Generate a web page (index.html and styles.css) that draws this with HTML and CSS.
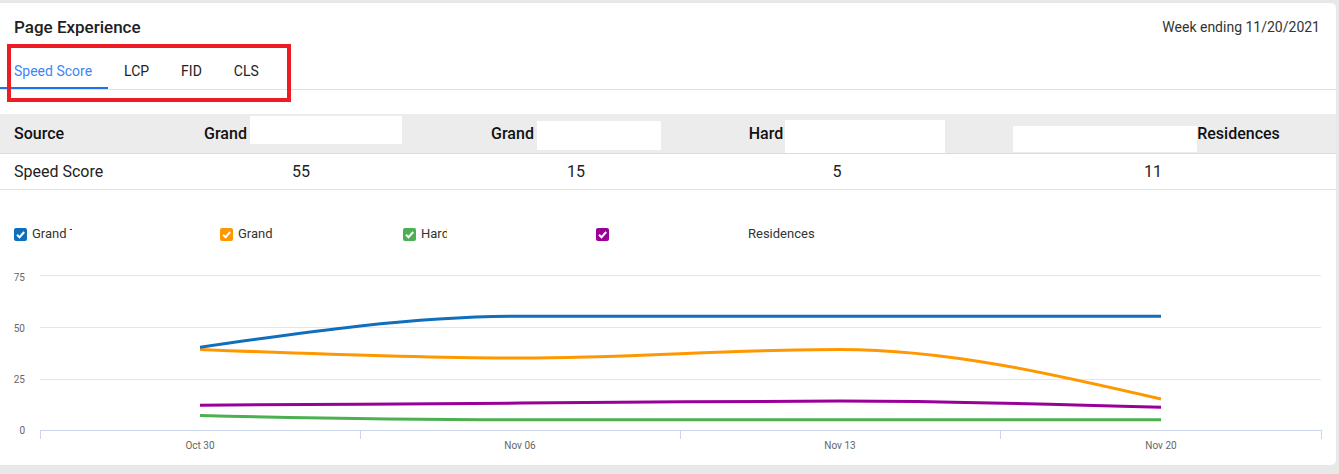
FILE: index.html
```html
<!DOCTYPE html>
<html>
<head>
<meta charset="utf-8">
<link rel="stylesheet" href="styles.css">
</head>
<body>
<div class="card">
  <div class="head">
    <div class="title">Page Experience</div>
    <div class="week">Week ending 11/20/2021</div>
  </div>
  <div class="tabs">
    <div class="tab active">Speed Score</div>
    <div class="tab">LCP</div>
    <div class="tab">FID</div>
    <div class="tab">CLS</div>
  </div>
  <div class="annot"></div>

  <div class="table">
    <div class="thead">
      <div class="th first">Source</div>
      <div class="th c2"><span class="htxt">Grand</span><span class="redact r1"></span></div>
      <div class="th c3"><span class="htxt">Grand</span><span class="redact r2"></span></div>
      <div class="th c4"><span class="htxt">Hard</span><span class="redact r3"></span></div>
      <div class="th c5"><span class="redact r4"></span><span class="htxt">Residences</span></div>
    </div>
    <div class="trow">
      <div class="td first">Speed Score</div>
      <div class="td">55</div>
      <div class="td">15</div>
      <div class="td d4">5</div>
      <div class="td d5">11</div>
    </div>
  </div>

  <div class="legend">
    <div class="li li1">
      <svg class="cb" viewBox="0 0 13 13"><rect width="13" height="13" rx="2" fill="#0f6fbd"/><path d="M3 6.8 L5.5 9.2 L10.2 4" stroke="#fff" stroke-width="2" fill="none"/></svg>
      <span class="lab w1">Grand T</span>
    </div>
    <div class="li li2">
      <svg class="cb" viewBox="0 0 13 13"><rect width="13" height="13" rx="2" fill="#ff9800"/><path d="M3 6.8 L5.5 9.2 L10.2 4" stroke="#fff" stroke-width="2" fill="none"/></svg>
      <span class="lab w2">Grand H</span>
    </div>
    <div class="li li3">
      <svg class="cb" viewBox="0 0 13 13"><rect width="13" height="13" rx="2" fill="#4caf50"/><path d="M3 6.8 L5.5 9.2 L10.2 4" stroke="#fff" stroke-width="2" fill="none"/></svg>
      <span class="lab w3">Hard Rock</span>
    </div>
    <div class="li li4">
      <svg class="cb" viewBox="0 0 13 13"><rect width="13" height="13" rx="2" fill="#990099"/><path d="M3 6.8 L5.5 9.2 L10.2 4" stroke="#fff" stroke-width="2" fill="none"/></svg>
      <span class="lab blank"></span><span class="lab">Residences</span>
    </div>
  </div>

  <svg class="chart" width="1336" height="197" viewBox="0 258 1336 197">
    <g stroke="#e6e6e6" stroke-width="1">
      <line x1="40" y1="274.5" x2="1321" y2="274.5"/>
      <line x1="40" y1="326.5" x2="1321" y2="326.5"/>
      <line x1="40" y1="378.5" x2="1321" y2="378.5"/>
    </g>
    <g stroke="#ccd6eb" stroke-width="1">
      <line x1="40" y1="429.5" x2="1321" y2="429.5"/>
      <line x1="40.5" y1="429" x2="40.5" y2="438"/>
      <line x1="360.5" y1="429" x2="360.5" y2="438"/>
      <line x1="680.5" y1="429" x2="680.5" y2="438"/>
      <line x1="1000.5" y1="429" x2="1000.5" y2="438"/>
      <line x1="1321.5" y1="429" x2="1321.5" y2="438"/>
    </g>
    <g class="ylab" text-anchor="end">
      <text x="25" y="280">75</text>
      <text x="25" y="331">50</text>
      <text x="25" y="382">25</text>
      <text x="25" y="433">0</text>
    </g>
    <g class="xlab" text-anchor="middle">
      <text x="200" y="448">Oct 30</text>
      <text x="520" y="448">Nov 06</text>
      <text x="840" y="448">Nov 13</text>
      <text x="1161" y="448">Nov 20</text>
    </g>
    <g fill="none" stroke-width="3" stroke-linecap="butt">
      <path stroke="#4caf50" d="M200 414.5 C306.7 417 413.3 418.7 520 418.7 L1161 418.7"/>
      <path stroke="#990099" d="M200 404.2 C306.7 403.5 413.3 402.8 520 402.1 C626.7 401.4 733.3 400.1 840 400.1 C947 400.1 1054 403.2 1161 406.3"/>
      <path stroke="#ff9800" d="M200 348.4 C306.7 352.8 413.3 357.1 520 357.1 C626.7 357.1 733.3 348.4 840 348.4 C947 348.4 1054 373.2 1161 398"/>
      <path stroke="#0f6fbd" d="M200 346.3 C306.7 330.8 413.3 315.3 520 315.3 L1161 315.3"/>
    </g>
  </svg>
</div>
</body>
</html>
```

FILE: styles.css
```css
* { box-sizing: border-box; }
body {
  margin: 0;
  background: #e8e8e8;
  font-family: Roboto, "Liberation Sans", Arial, sans-serif;
  color: #222;
}
.card {
  position: relative;
  margin-top: 3px;
  width: 1336px;
  height: 462px;
  background: #fff;
  border-radius: 0 5px 5px 0;
  overflow: hidden;
}
.head {
  display: flex;
  justify-content: space-between;
  align-items: center;
  padding: 14px 16px 0 14px;
  height: 34px;
}
.title {
  font-size: 17px;
  font-weight: 500;
  line-height: 20px;
  color: #202124;
}
.week {
  font-size: 14px;
  line-height: 20px;
  color: #333;
}
.tabs {
  display: flex;
  border-bottom: 1px solid #e0e0e0;
}
.tab {
  font-size: 14px;
  line-height: 20px;
  padding: 24px 16px 8px 16px;
  color: #222;
}
.tab.active {
  padding-left: 14px;
  color: #3d86f4;
  box-shadow: inset 0 -2px 0 #1a73e8;
}
.annot {
  position: absolute;
  left: 7px;
  top: 41px;
  width: 284px;
  height: 58px;
  border: 4px solid #ed1c24;
}
.table {
  margin-top: 24px;
}
.thead, .trow {
  display: grid;
  grid-template-columns: 170px 262px 288px 244px 372px;
}
.thead {
  background: #ececec;
  height: 40px;
  border-bottom: 1px solid #dcdcdc;
}
.trow {
  height: 36px;
  border-bottom: 1px solid #e0e0e0;
}
.th {
  display: flex;
  justify-content: center;
  align-items: flex-start;
  font-size: 16px;
  font-weight: 500;
  color: #111;
}
.th.first, .td.first {
  justify-content: flex-start;
  padding-left: 14px;
}
.c2 { padding-left: 4px; }
.c4 { padding-left: 10px; }
.c5 { padding-right: 7px; }
.d4 { padding-right: 10px; }
.d5 { padding-left: 6px; }
.htxt {
  line-height: 20px;
  margin-top: 10px;
}
.redact {
  display: block;
  background: #fff;
}
.r1 { width: 152px; height: 28px; margin-top: 2px; margin-left: 3px; }
.r2 { width: 124px; height: 29px; margin-top: 7px; margin-left: 3px; }
.r3 { width: 160px; height: 33px; margin-top: 6px; margin-left: 2px; }
.r4 { width: 184px; height: 26px; margin-top: 12px; }
.th.first { padding-top: 10px; line-height: 20px; }
.td {
  display: flex;
  justify-content: center;
  align-items: center;
  font-size: 16px;
  color: #222;
}
.legend {
  display: flex;
  margin-top: 37px;
  padding-left: 14px;
  height: 14px;
  align-items: center;
}
.li {
  display: flex;
  align-items: center;
  font-size: 13px;
  color: #333;
}
.li1 { width: 206px; }
.li2 { width: 183px; }
.li3 { width: 193px; }
.cb {
  width: 13px;
  height: 13px;
  flex: none;
  margin-right: 5px;
}
.lab {
  white-space: nowrap;
  overflow: hidden;
  line-height: 16px;
}
.w1 { width: 40px; }
.w2 { width: 38px; }
.w3 { width: 26px; }
.blank { width: 134px; }
.chart {
  display: block;
  margin-top: 18px;
}
.ylab text, .xlab text {
  font-family: Roboto, "Liberation Sans", Arial, sans-serif;
  font-size: 10px;
  fill: #666;
}
```
